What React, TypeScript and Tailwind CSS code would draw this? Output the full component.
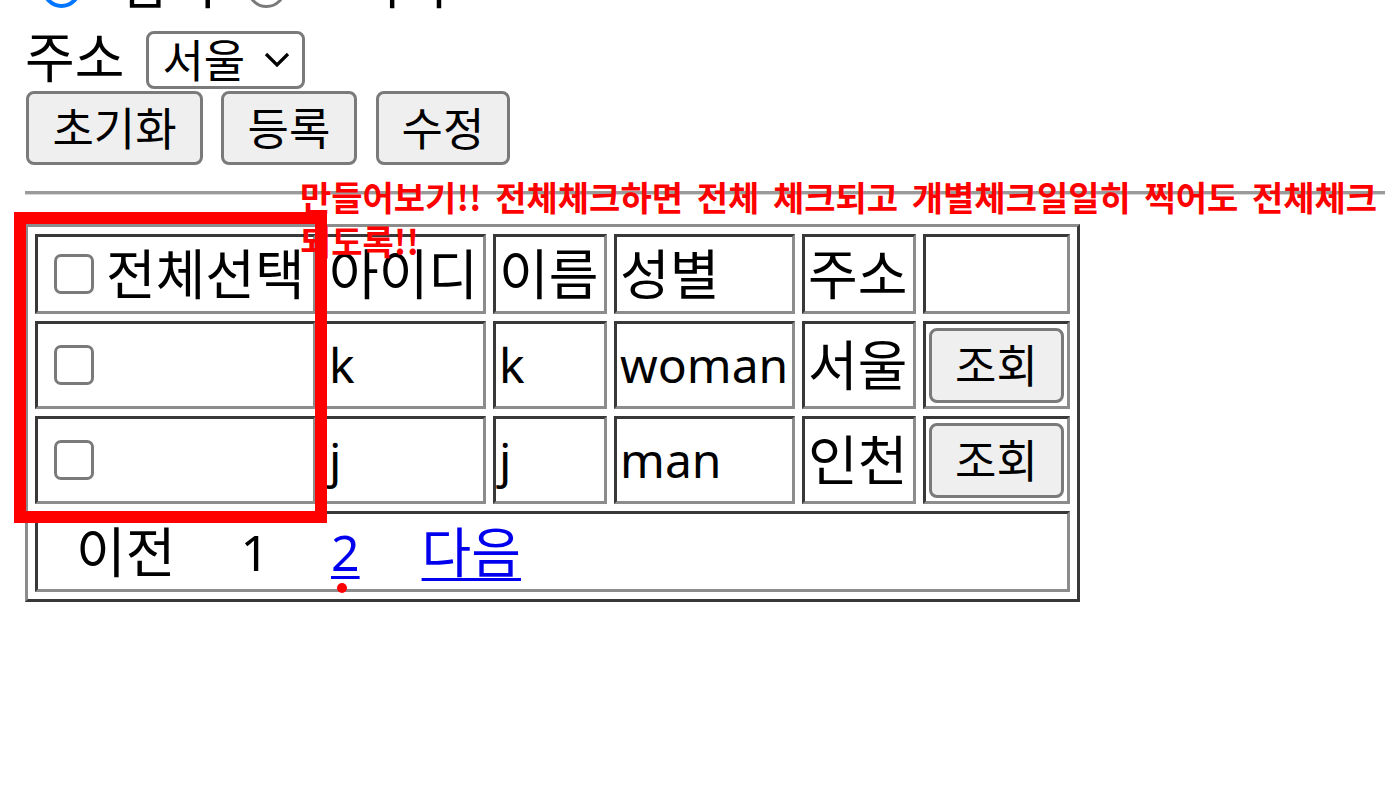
import React from "react";

const cell =
  "border-[3px] border-solid border-t-[#383838] border-l-[#383838] border-r-[#8c8c8c] border-b-[#8c8c8c] p-[3px] align-middle text-left";

const formBtn =
  "bg-[#efefef] border-[3px] border-solid border-[#7a7a7a] rounded-[8px] text-[45px] leading-none text-black flex items-center justify-center";

const check =
  "appearance-none block shrink-0 w-[40px] h-[40px] bg-white border-[3px] border-solid border-[#7a7a7a] rounded-[7px]";

type Member = { id: string; name: string; gender: string; addr: string };

const members: Member[] = [
  { id: "k", name: "k", gender: "woman", addr: "서울" },
  { id: "j", name: "j", gender: "man", addr: "인천" },
];

export default function App() {
  return (
    <div className="relative w-[1385px] h-[803px] overflow-hidden bg-white text-black font-['Noto_Sans','Noto_Sans_CJK_KR',sans-serif]">
      <div className="flex flex-col items-start pl-[25px]">
        {/* 성별 */}
        <div className="flex items-end h-[54px] -mt-[44px] text-[54px] leading-[54px]">
          <input
            type="radio"
            name="gender"
            defaultChecked
            className="appearance-none block ml-[17px] mb-[2px] w-[39px] h-[39px] rounded-full bg-white border-[4px] border-solid border-[#0075ff]"
          />
          <span className="ml-[39px]">남자</span>
          <input
            type="radio"
            name="gender"
            className="appearance-none block ml-[28px] mb-[2px] w-[39px] h-[39px] rounded-full bg-white border-[3px] border-solid border-[#7a7a7a]"
          />
          <span className="ml-[65px]">여자</span>
        </div>

        {/* 주소 */}
        <div className="flex items-start mt-[20px]">
          <span className="text-[54px] leading-[54px]">주소</span>
          <div className="relative ml-[22px] mt-[1px] w-[159px] h-[58px]">
            <select
              defaultValue="서울"
              className="appearance-none w-full h-full bg-white border-[3px] border-solid border-[#7a7a7a] rounded-[8px] pl-[13px] text-[45px] leading-none text-black outline-none font-['Noto_Sans','Noto_Sans_CJK_KR',sans-serif]"
            >
              <option>서울</option>
              <option>인천</option>
            </select>
            <svg
              className="absolute right-[15px] top-[21px] pointer-events-none"
              width="26"
              height="16"
              viewBox="0 0 26 16"
              fill="none"
            >
              <path d="M2 2 L13 13 L24 2" stroke="#000" strokeWidth="3.2" />
            </svg>
          </div>
        </div>

        {/* 버튼 */}
        <div className="flex mt-[2px]">
          <button className={`${formBtn} ml-[1px] w-[177px] h-[74px]`}>초기화</button>
          <button className={`${formBtn} ml-[18px] w-[136px] h-[74px]`}>등록</button>
          <button className={`${formBtn} ml-[19px] w-[134px] h-[74px]`}>수정</button>
        </div>

        <hr className="mt-[26px] w-[1360px] h-[4px] border-0 border-t-[3px] border-solid border-t-[#9a9a9a] border-b border-b-[#d6d6d6]" />

        {/* 회원 목록 */}
        <table className="mt-[29px] table-fixed w-[1055px] border-separate border-spacing-[7px] border-[3px] border-solid border-t-[#8c8c8c] border-l-[#8c8c8c] border-r-[#383838] border-b-[#383838] text-[54px] leading-none">
          <colgroup>
            <col className="w-[281px]" />
            <col className="w-[163px]" />
            <col className="w-[114px]" />
            <col className="w-[181px]" />
            <col className="w-[114px]" />
            <col className="w-[147px]" />
          </colgroup>
          <thead>
            <tr>
              <th className={`${cell} h-[80px] font-normal`}>
                <div className="flex items-center">
                  <input type="checkbox" className={`${check} ml-[13px]`} />
                  <span className="ml-[12px] whitespace-nowrap">전체선택</span>
                </div>
              </th>
              <th className={`${cell} h-[80px] font-normal whitespace-nowrap`}>아이디</th>
              <th className={`${cell} h-[80px] font-normal whitespace-nowrap`}>이름</th>
              <th className={`${cell} h-[80px] font-normal whitespace-nowrap`}>성별</th>
              <th className={`${cell} h-[80px] font-normal whitespace-nowrap`}>주소</th>
              <th className={`${cell} h-[80px]`}></th>
            </tr>
          </thead>
          <tbody>
            {members.map((m) => (
              <tr key={m.id}>
                <td className={`${cell} h-[88px]`}>
                  <input type="checkbox" className={`${check} ml-[13px]`} />
                </td>
                <td className={`${cell} h-[88px] text-[48px]`}>{m.id}</td>
                <td className={`${cell} h-[88px] text-[48px]`}>{m.name}</td>
                <td className={`${cell} h-[88px] text-[48px]`}>{m.gender}</td>
                <td className={`${cell} h-[88px] whitespace-nowrap`}>{m.addr}</td>
                <td className={`${cell} h-[88px]`}>
                  <button className={`${formBtn} w-full h-[75px]`}>조회</button>
                </td>
              </tr>
            ))}
            <tr>
              <td colSpan={6} className={`${cell} h-[81px]`}>
                <div className="flex items-center">
                  <span className="ml-[35px]">이전</span>
                  <span className="ml-[65px] text-[50px]">1</span>
                  <a
                    href="#"
                    className="ml-[62px] text-[50px] text-[#0000ee] underline decoration-[3px] underline-offset-[5px]"
                  >
                    2
                  </a>
                  <a
                    href="#"
                    className="ml-[62px] text-[#0000ee] underline decoration-[3px] underline-offset-[5px]"
                  >
                    다음
                  </a>
                </div>
              </td>
            </tr>
          </tbody>
        </table>
      </div>

      {/* 메모 */}
      <div className="absolute left-[300px] top-[175px] z-10 whitespace-nowrap text-[34px] leading-[44px] font-bold text-[#ff0000] font-['Noto_Sans_CJK_KR',sans-serif] [word-spacing:6px]">
        <p>만들어보기!! 전체체크하면 전체 체크되고 개별체크일일히 찍어도 전체체크</p>
        <p>되도록!!</p>
      </div>
      <div className="absolute left-[14px] top-[212px] z-10 w-[313px] h-[311px] border-[12px] border-solid border-[#ff0000]" />
      <div className="absolute left-[337px] top-[583px] z-10 w-[10px] h-[10px] rounded-full bg-[#ff0000]" />
    </div>
  );
}
